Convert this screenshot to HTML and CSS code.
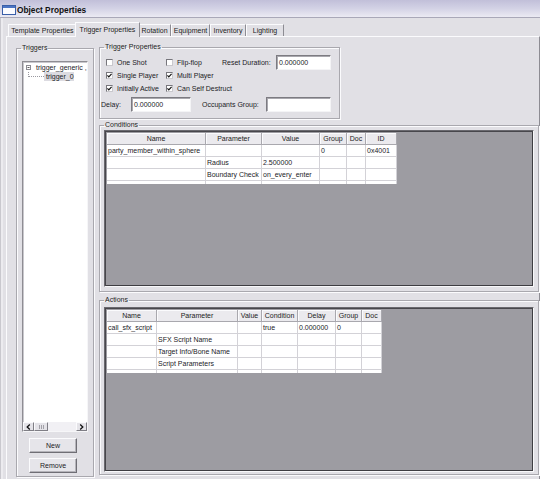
FILE: index.html
```html
<!DOCTYPE html>
<html>
<head>
<meta charset="utf-8">
<title>Object Properties</title>
<link rel="stylesheet" href="styles.css">
</head>
<body>
<div class="window">
  <div class="titlebar">
    <svg class="appicon" width="14" height="10" viewBox="0 0 14 10"><rect x="0.5" y="0.5" width="13" height="9" fill="#fbfbff" stroke="#3a5ea8"/><rect x="1" y="1" width="12" height="2" fill="#4c74c4"/></svg>
    <span class="title">Object Properties</span>
  </div>
  <div class="tabs">
    <div class="tab t-template">Template Properties</div>
    <div class="tab active t-trigger">Trigger Properties</div>
    <div class="tab t-rotation">Rotation</div>
    <div class="tab t-equipment">Equipment</div>
    <div class="tab t-inventory">Inventory</div>
    <div class="tab t-lighting">Lighting</div>
  </div>
  <div class="panel">
    <fieldset class="group triggers">
      <legend>Triggers</legend>
      <div class="tree">
        <div class="tree-row">
          <svg class="expander" width="5" height="5" viewBox="0 0 5 5"><rect x="0.5" y="0.5" width="4" height="4" fill="#fff" stroke="#8c8b92"/><line x1="1.5" y1="2.5" x2="3.5" y2="2.5" stroke="#333" stroke-width="0.8"/></svg>
          <span class="node-text">trigger_generic ,</span>
        </div>
        <div class="tree-row child">
          <span class="branch"></span>
          <span class="sel">trigger_0</span>
        </div>
        <div class="tree-fill"></div>
        <div class="hscroll">
          <span class="sbtn"><svg width="5" height="6" viewBox="0 0 5 6"><polyline points="3.8,0.6 1.2,3 3.8,5.4" fill="none" stroke="#111" stroke-width="1.3"/></svg></span>
          <span class="thumb"><i></i><i></i><i></i></span>
          <span class="track"></span>
          <span class="sbtn"><svg width="5" height="6" viewBox="0 0 5 6"><polyline points="1.2,0.6 3.8,3 1.2,5.4" fill="none" stroke="#111" stroke-width="1.3"/></svg></span>
        </div>
      </div>
      <button class="btn btn-new">New</button>
      <button class="btn btn-remove">Remove</button>
    </fieldset>

    <div class="rightcol">
      <fieldset class="group props">
        <legend>Trigger Properties</legend>
        <div class="prow r1">
          <label class="cb c1"><span class="box"></span>One Shot</label>
          <label class="cb c2"><span class="box"></span>Flip-flop</label>
          <span class="lbl l-reset">Reset Duration:</span>
          <span class="field f-reset">0.000000</span>
        </div>
        <div class="prow r2">
          <label class="cb c1"><span class="box"><svg width="5" height="5" viewBox="0 0 5 5"><polyline points="0.4,2.4 1.8,3.9 4.6,0.8" fill="none" stroke="#111" stroke-width="1.2"/></svg></span>Single Player</label>
          <label class="cb c2"><span class="box"><svg width="5" height="5" viewBox="0 0 5 5"><polyline points="0.4,2.4 1.8,3.9 4.6,0.8" fill="none" stroke="#111" stroke-width="1.2"/></svg></span>Multi Player</label>
        </div>
        <div class="prow r3">
          <label class="cb c1"><span class="box"><svg width="5" height="5" viewBox="0 0 5 5"><polyline points="0.4,2.4 1.8,3.9 4.6,0.8" fill="none" stroke="#111" stroke-width="1.2"/></svg></span>Initially Active</label>
          <label class="cb c2"><span class="box"><svg width="5" height="5" viewBox="0 0 5 5"><polyline points="0.4,2.4 1.8,3.9 4.6,0.8" fill="none" stroke="#111" stroke-width="1.2"/></svg></span>Can Self Destruct</label>
        </div>
        <div class="prow r4">
          <span class="lbl l-delay">Delay:</span>
          <span class="field f-delay">0.000000</span>
          <span class="lbl l-occ">Occupants Group:</span>
          <span class="field f-occ"></span>
        </div>
      </fieldset>

      <fieldset class="group conditions">
        <legend>Conditions</legend>
        <div class="grid grid-cond">
          <table class="tbl">
            <thead>
              <tr>
                <th class="w99">Name</th><th class="w56">Parameter</th><th class="w58">Value</th><th class="w27">Group</th><th class="w19">Doc</th><th class="w31">ID</th>
              </tr>
            </thead>
            <tbody>
              <tr><td>party_member_within_sphere</td><td></td><td></td><td>0</td><td></td><td>0x4001</td></tr>
              <tr><td></td><td>Radius</td><td>2.500000</td><td></td><td></td><td></td></tr>
              <tr><td></td><td>Boundary Check</td><td>on_every_enter</td><td></td><td></td><td></td></tr>
              <tr class="stub"><td></td><td></td><td></td><td></td><td></td><td></td></tr>
            </tbody>
          </table>
        </div>
      </fieldset>

      <fieldset class="group actions">
        <legend>Actions</legend>
        <div class="grid grid-act">
          <table class="tbl">
            <thead>
              <tr>
                <th class="w50">Name</th><th class="w81">Parameter</th><th class="w24">Value</th><th class="w36">Condition</th><th class="w38">Delay</th><th class="w26">Group</th><th class="w20">Doc</th>
              </tr>
            </thead>
            <tbody>
              <tr><td>call_sfx_script</td><td></td><td></td><td>true</td><td>0.000000</td><td>0</td><td></td></tr>
              <tr><td></td><td>SFX Script Name</td><td></td><td></td><td></td><td></td><td></td></tr>
              <tr><td></td><td>Target Info/Bone Name</td><td></td><td></td><td></td><td></td><td></td></tr>
              <tr><td></td><td>Script Parameters</td><td></td><td></td><td></td><td></td><td></td></tr>
              <tr class="stub"><td></td><td></td><td></td><td></td><td></td><td></td><td></td></tr>
            </tbody>
          </table>
        </div>
      </fieldset>
    </div>
  </div>
</div>
</body>
</html>
```
FILE: styles.css
```css
* { box-sizing: border-box; }
html, body { margin: 0; padding: 0; }
body {
  width: 540px;
  height: 479px;
  overflow: hidden;
  background: #e1e0e5;
  font-family: "Liberation Sans", Arial, sans-serif;
  font-size: 7px;
  color: #1b1b1f;
}
.window {
  height: 479px;
  display: flex;
  flex-direction: column;
  box-shadow: inset 1px 0 0 #c9c8ce, inset 3px 0 0 #ecebef;
}

/* title bar */
.titlebar {
  height: 18px;
  flex: none;
  display: flex;
  align-items: center;
  gap: 1px;
  padding: 2px 0 0 2px;
  border-bottom: 1px solid #a9a8b8;
  background: linear-gradient(#c1bfd9, #d3d2e5 50%, #ebeaf3);
}
.appicon { display: block; }
.title { font-weight: bold; font-size: 8.3px; color: #111; }

/* tabs */
.tabs {
  height: 18px;
  flex: none;
  display: flex;
  align-items: flex-end;
  padding-left: 8px;
}
.tab {
  height: 12px;
  line-height: 11px;
  text-align: center;
  white-space: nowrap;
  border-top: 1px solid #fbfbfd;
  border-left: 1px solid #fbfbfd;
  border-right: 1px solid #8d8c93;
  color: #222;
}
.tab.active {
  height: 15px;
  line-height: 13px;
  margin: 0 -2px -1px -2px;
  position: relative;
  z-index: 1;
  background: #e1e0e5;
}
.t-template { width: 69px; }
.t-trigger { width: 65px; }
.t-rotation { width: 33px; }
.t-equipment { width: 39px; }
.t-inventory { width: 36px; }
.t-lighting { width: 38px; }

/* tab panel */
.panel {
  flex: 1;
  margin-left: 6px;
  border-top: 1px solid #fbfbfd;
  border-left: 1px solid #fbfbfd;
  border-right: 1px solid #8d8c93;
  display: flex;
  align-items: flex-start;
  gap: 5px;
  padding: 6px 0 0 9px;
}

/* group boxes */
fieldset.group {
  margin: 0;
  padding: 0;
  min-width: 0;
  border: 1px solid #a9a8ae;
  box-shadow: inset 1px 1px 0 #fbfbfd, 1px 1px 0 #fbfbfd;
}
fieldset.group legend {
  margin-left: 4px;
  padding: 0 1px;
  font-size: 7px;
  line-height: 8px;
  color: #222;
}

.triggers {
  width: 78px;
  height: 433px;
  margin-top: 1px !important;
}
.tree {
  margin: 9px 5px 0 5px;
  height: 371px;
  background: #fff;
  border: 1px solid;
  border-color: #8e8d93 #f6f6f8 #f6f6f8 #8e8d93;
  box-shadow: inset 1px 1px 0 #c9c8cd;
  display: flex;
  flex-direction: column;
  overflow: hidden;
}
.tree-row {
  height: 9px;
  display: flex;
  align-items: center;
  white-space: nowrap;
  padding-left: 3px;
  flex: none;
}
.tree-row:first-child { margin-top: 1px; }
.expander { display: block; flex: none; }
.node-text { margin-left: 5px; }
.tree-row.child { align-items: stretch; }
.branch {
  width: 16px;
  height: 5px;
  margin-left: 2px;
  border-left: 1px dotted #9a99a0;
  border-bottom: 1px dotted #9a99a0;
  flex: none;
}
.sel {
  background: #dcdbe1;
  padding: 0 2px;
  width: 30px;
  line-height: 9px;
}
.tree-fill { flex: 1; }
.hscroll {
  height: 9px;
  flex: none;
  display: flex;
  background: #f1f0f4;
}
.sbtn, .thumb {
  background: #e4e3e8;
  border: 1px solid;
  border-color: #fbfbfd #7f7e85 #7f7e85 #fbfbfd;
  display: flex;
  align-items: center;
  justify-content: center;
}
.sbtn { width: 11px; }
.thumb { width: 14px; gap: 1px; }
.thumb i { display: block; width: 1px; height: 4px; background: #a2a1a8; }
.track { flex: 1; }

.btn {
  display: block;
  width: 48px;
  height: 15px;
  margin: 6px 0 0 12px;
  padding: 0;
  font-family: "Liberation Sans", Arial, sans-serif;
  font-size: 7px;
  color: #1b1b1f;
  background: #e6e5ea;
  border: 1px solid;
  border-color: #fbfbfd #6f6e75 #6f6e75 #fbfbfd;
  box-shadow: inset -1px -1px 0 #b5b4ba;
}
.btn-remove { margin-top: 5px; }

/* right column */
.rightcol {
  width: 440px;
  display: flex;
  flex-direction: column;
}
.props {
  width: 241px;
  height: 76px;
  padding-top: 4px !important;
}
.prow {
  display: flex;
  align-items: center;
  white-space: nowrap;
  padding-left: 6px;
}
.r1 { height: 15px; }
.r2 { height: 10px; }
.r3 { height: 16px; }
.r4 { height: 16px; padding-left: 1px; }
.cb { display: flex; align-items: center; gap: 4px; }
.c1 { width: 60px; }
.c2 { width: 56px; }
.box {
  width: 7px;
  height: 7px;
  flex: none;
  background: #fff;
  border: 1px solid;
  border-color: #77767c #c9c8cd #c9c8cd #77767c;
  display: flex;
  align-items: center;
  justify-content: center;
}
.box svg { display: block; }
.lbl { display: block; }
.l-reset { width: 54px; }
.l-delay { width: 30px; }
.l-occ { width: 64px; margin-left: 11px; }
.field {
  display: block;
  height: 15px;
  line-height: 13px;
  padding-left: 2px;
  background: #fff;
  border: 1px solid;
  border-color: #7c7b81 #f4f4f6 #f4f4f6 #7c7b81;
  box-shadow: inset 1px 1px 0 #a9a8ae;
}
.f-reset { width: 55px; }
.f-delay { width: 60px; }
.f-occ { width: 65px; }

.conditions { height: 171px; margin-top: 2px !important; }
.actions { height: 179px; margin-top: 4px !important; }

.grid {
  margin: 0 4px;
  background: #9d9ca2;
  border: 1px solid;
  border-color: #6a696f #f8f8fa #f8f8fa #6a696f;
  box-shadow: inset 1px 1px 0 #48474c, inset -1px -1px 0 #3e3d42;
  padding: 2px 0 0 2px;
  overflow: hidden;
}
.grid-cond { margin-top: 1px; height: 157px; }
.grid-act { margin-top: 3px; height: 165px; }

.tbl {
  border-collapse: separate;
  border-spacing: 0;
  table-layout: fixed;
  background: #fff;
}
.tbl tr { height: 12px; }
.tbl th {
  height: 12px;
  padding: 0;
  font-weight: normal;
  text-align: center;
  line-height: 10px;
  background: #ebeaee;
  border-right: 1px solid #a9a8ae;
  border-bottom: 1px solid #a9a8ae;
  box-shadow: inset 1px 1px 0 #fbfbfd;
  color: #222;
}
.tbl td {
  height: 12px;
  padding: 0 1px;
  line-height: 11px;
  white-space: nowrap;
  overflow: hidden;
  border-right: 1px solid #d3d2d7;
  border-bottom: 1px solid #d3d2d7;
}
.tbl tr.stub { height: 3px; }
.tbl tr.stub td { height: 3px; line-height: 0; font-size: 0; border-bottom: 0; }

.w99 { width: 99px; }
.w56 { width: 56px; }
.w58 { width: 58px; }
.w27 { width: 27px; }
.w19 { width: 19px; }
.w31 { width: 31px; }
.w50 { width: 50px; }
.w81 { width: 81px; }
.w24 { width: 24px; }
.w36 { width: 36px; }
.w38 { width: 38px; }
.w26 { width: 26px; }
.w20 { width: 20px; }
```
